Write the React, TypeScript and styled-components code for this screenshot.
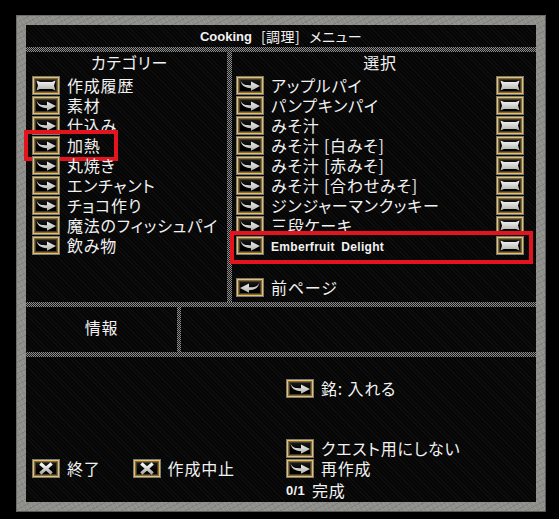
import React from 'react';
import styled, { createGlobalStyle } from 'styled-components';

const GlobalStyle = createGlobalStyle`
  html, body {
    margin: 0;
    padding: 0;
    background: #000;
  }
  body {
    width: 559px;
    height: 519px;
    overflow: hidden;
    font-family: "Noto Sans CJK JP", "Noto Sans", sans-serif;
    font-feature-settings: "palt";
    color: #f2f2f2;
  }
`;

const Screen = styled.div`
  width: 559px;
  height: 519px;
  box-sizing: border-box;
  padding: 15px 0 0 16px;
  background: #000;
`;

const Frame = styled.div`
  width: 530px;
  height: 497px;
  box-sizing: border-box;
  padding: 10px;
  background:
    repeating-linear-gradient(62deg, rgba(255, 255, 255, 0.08) 0 1px, transparent 1px 4px),
    repeating-linear-gradient(-28deg, rgba(0, 0, 0, 0.1) 0 1px, transparent 1px 5px),
    #8e8e8a;
  box-shadow: inset 1px 1px 0 #6c6c68, inset -1px -1px 0 #5a5a56;
`;

const Panel = styled.div`
  height: 100%;
  display: flex;
  flex-direction: column;
  background: repeating-linear-gradient(45deg, #0e0e0e 0 1px, #060606 1px 3px);
`;

const checker = `repeating-conic-gradient(#8e8e8e 0 25%, #151515 0 50%) 0 0 / 2px 2px`;

const HSep = styled.div<{ $h?: number }>`
  flex-shrink: 0;
  height: ${p => p.$h ?? 5}px;
  background: ${checker};
`;

const VSep = styled.div`
  background: ${checker};
`;

const TitleBar = styled.div`
  height: 22px;
  flex-shrink: 0;
  display: flex;
  align-items: center;
  justify-content: center;
  gap: 9px;
  font-size: 14px;
  letter-spacing: 0.5px;
  white-space: pre;
`;

const Latin = styled.span<{ $narrow?: boolean; $size?: number }>`
  font-family: ${p => (p.$narrow ? '"Liberation Sans Narrow", ' : '')}"Liberation Sans", Arial, sans-serif;
  font-weight: bold;
  font-size: ${p => p.$size ?? 12}px;
  letter-spacing: ${p => (p.$narrow ? 0 : 0.3)}px;
  word-spacing: 3px;
`;

const Main = styled.div`
  height: 250px;
  flex-shrink: 0;
  display: grid;
  grid-template-columns: 201px 5px 1fr;
`;

const Column = styled.div<{ $pl: number; $pr?: number }>`
  display: flex;
  flex-direction: column;
  padding-left: ${p => p.$pl}px;
  padding-right: ${p => p.$pr ?? 0}px;
`;

const Header = styled.div`
  height: 20px;
  margin-bottom: 3px;
  display: flex;
  align-items: center;
  justify-content: center;
  font-size: 16px;
  letter-spacing: 0.8px;
`;

const Row = styled.div<{ $mt?: number; $mb?: number }>`
  position: relative;
  height: 20px;
  display: flex;
  align-items: center;
  gap: 7px;
  margin-top: ${p => p.$mt ?? 0}px;
  margin-bottom: ${p => p.$mb ?? 0}px;
`;

const Label = styled.span`
  flex: 1;
  font-size: 16px;
  line-height: 20px;
  letter-spacing: 0.8px;
  white-space: nowrap;
`;

const Mark = styled.span<{ $l: number; $t: number; $w: number; $h: number }>`
  position: absolute;
  left: ${p => p.$l}px;
  top: ${p => p.$t}px;
  width: ${p => p.$w}px;
  height: ${p => p.$h}px;
  box-sizing: border-box;
  border: 4px solid #e3141d;
  pointer-events: none;
`;

const IconFrame = styled.span`
  width: 28px;
  height: 19px;
  flex-shrink: 0;
  box-sizing: border-box;
  display: flex;
  align-items: center;
  justify-content: center;
  border: 1px solid #7a7a74;
  background: linear-gradient(#222, #000 60%);
  box-shadow:
    inset 0 0 0 1px #e2c272,
    inset 0 0 0 2px #8a6a2a,
    inset 0 0 0 3px #3e3a30;
`;

const InfoRow = styled.div`
  height: 45px;
  flex-shrink: 0;
  display: grid;
  grid-template-columns: 151px 4px 1fr;
`;

const InfoLabel = styled.div`
  display: flex;
  align-items: center;
  justify-content: center;
  padding-bottom: 6px;
  font-size: 16px;
  letter-spacing: 0.8px;
`;

const Bottom = styled.div`
  flex: 1;
  display: grid;
  grid-template-columns: 260px 1fr;
`;

const BottomLeft = styled.div`
  display: flex;
  align-items: flex-end;
  gap: 32px;
  padding: 0 0 24px 6px;
`;

const BottomRight = styled.div`
  display: flex;
  flex-direction: column;
  padding-top: 21px;
`;

const Status = styled.div`
  height: 20px;
  display: flex;
  align-items: center;
  gap: 7px;
  font-size: 16px;
  letter-spacing: 0.8px;
  margin-top: 2px;
`;

type Glyph = 'arrow' | 'scroll' | 'back' | 'cross';

function Icon({ kind }: { kind: Glyph }) {
  const fill = `url(#g-${kind})`;
  return (
    <IconFrame>
      <svg width="22" height="13" viewBox="0 0 22 13">
        <defs>
          <linearGradient id={`g-${kind}`} x1="0" y1="0" x2="0" y2="1">
            <stop offset="0" stopColor="#f8f8f6" />
            <stop offset="1" stopColor="#b0b0ac" />
          </linearGradient>
        </defs>
        {kind === 'arrow' && (
          <path d="M1.5 0.8 C2.5 6 7 6.3 12 6.3 L12 2.6 L21 7 L12 11.8 L12 9.2 C5.5 9.2 2 6 1.5 0.8 Z" fill={fill} />
        )}
        {kind === 'back' && (
          <path d="M20.5 0.8 C19.5 6 15 6.3 10 6.3 L10 2.6 L1 7 L10 11.8 L10 9.2 C16.5 9.2 20 6 20.5 0.8 Z" fill={fill} />
        )}
        {kind === 'scroll' && (
          <path d="M1.5 1.5 L5 3 L17 3 L20.5 1.5 L19 6.5 L20.5 11.5 L17 10 L5 10 L1.5 11.5 L3 6.5 Z" fill={fill} />
        )}
        {kind === 'cross' && (
          <path d="M6.5 2.5 L15.5 10.5 M15.5 2.5 L6.5 10.5" stroke={fill} strokeWidth="3.2" strokeLinecap="square" />
        )}
      </svg>
    </IconFrame>
  );
}

const categories = [
  '作成履歴', '素材', '仕込み', '加熱', '丸焼き', 'エンチャント', 'チョコ作り', '魔法のフィッシュパイ', '飲み物',
];

const recipes = [
  'アップルパイ', 'パンプキンパイ', 'みそ汁', 'みそ汁 [白みそ]', 'みそ汁 [赤みそ]',
  'みそ汁 [合わせみそ]', 'ジンジャーマンクッキー', '三段ケーキ',
];

export default function App() {
  return (
    <>
      <GlobalStyle />
      <Screen>
        <Frame>
          <Panel>
            <TitleBar>
              <Latin $narrow $size={13}>Cooking</Latin>
              <span>[調理]</span>
              <span>メニュー</span>
            </TitleBar>
            <HSep />
            <Main>
              <Column $pl={6}>
                <Header>カテゴリー</Header>
                {categories.map((c, i) => (
                  <Row key={c}>
                    <Icon kind={i === 0 ? 'scroll' : 'arrow'} />
                    <Label>{c}</Label>
                    {c === '加熱' && <Mark $l={-8} $t={-5} $w={94} $h={31} />}
                  </Row>
                ))}
              </Column>
              <VSep />
              <Column $pl={4} $pr={12}>
                <Header>選択</Header>
                {recipes.map(r => (
                  <Row key={r}>
                    <Icon kind="arrow" />
                    <Label>{r}</Label>
                    <Icon kind="scroll" />
                  </Row>
                ))}
                <Row>
                  <Icon kind="arrow" />
                  <Label>
                    <Latin>Emberfruit Delight</Latin>
                  </Label>
                  <Icon kind="scroll" />
                  <Mark $l={-6} $t={-4} $w={303} $h={33} />
                </Row>
                <Row $mt={22}>
                  <Icon kind="back" />
                  <Label>前ページ</Label>
                </Row>
              </Column>
            </Main>
            <HSep />
            <InfoRow>
              <InfoLabel>情報</InfoLabel>
              <VSep />
              <div />
            </InfoRow>
            <HSep />
            <Bottom>
              <BottomLeft>
                <Row>
                  <Icon kind="cross" />
                  <Label>終了</Label>
                </Row>
                <Row>
                  <Icon kind="cross" />
                  <Label>作成中止</Label>
                </Row>
              </BottomLeft>
              <BottomRight>
                <Row $mb={40}>
                  <Icon kind="arrow" />
                  <Label>銘: 入れる</Label>
                </Row>
                <Row>
                  <Icon kind="arrow" />
                  <Label>クエスト用にしない</Label>
                </Row>
                <Row>
                  <Icon kind="arrow" />
                  <Label>再作成</Label>
                </Row>
                <Status>
                  <Latin $size={13}>0/1</Latin>
                  <span>完成</span>
                </Status>
              </BottomRight>
            </Bottom>
          </Panel>
        </Frame>
      </Screen>
    </>
  );
}
